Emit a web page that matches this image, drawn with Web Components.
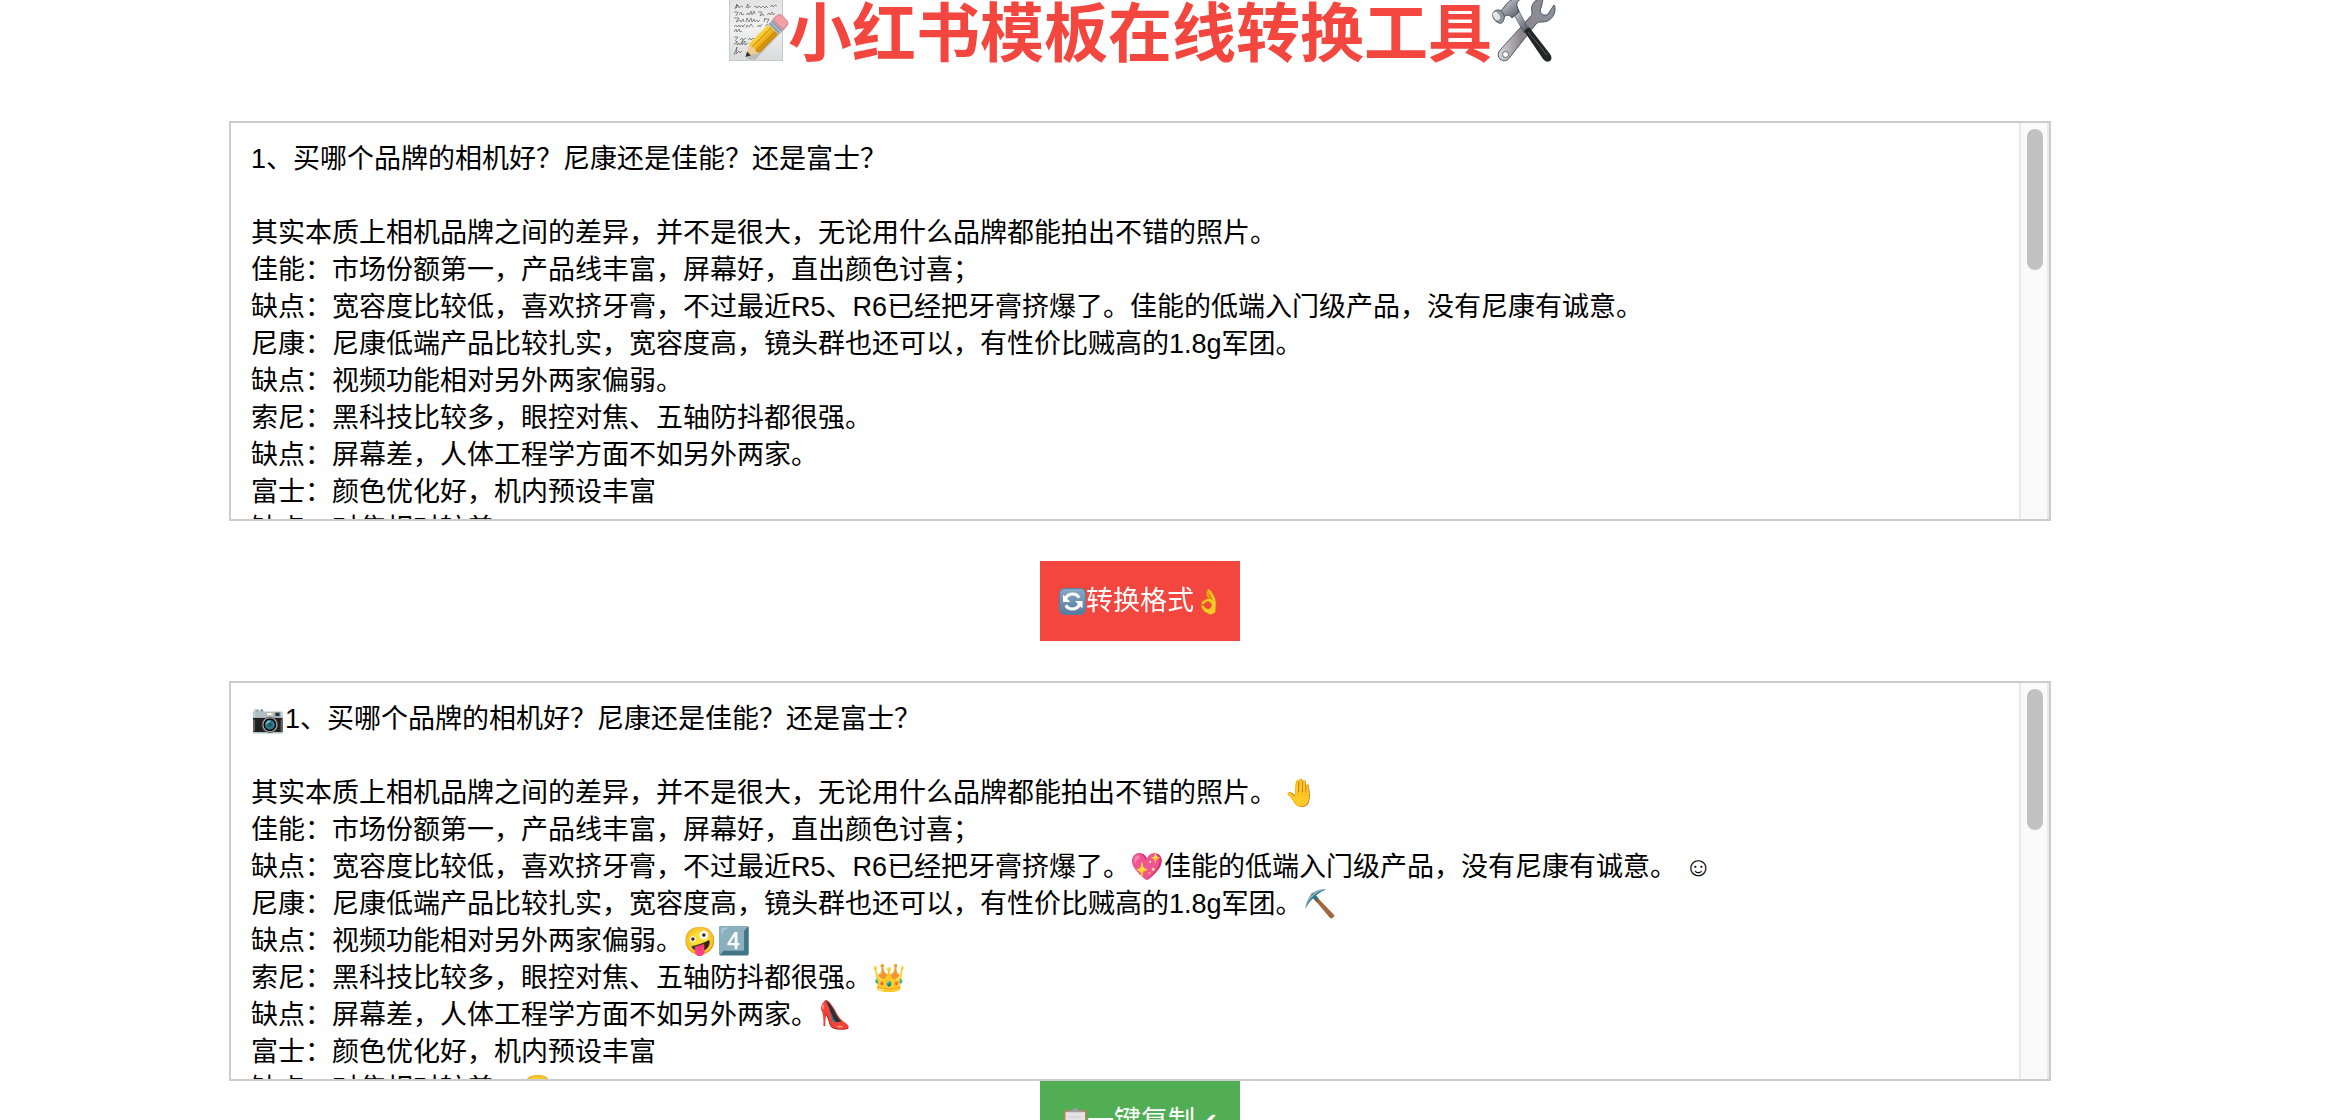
<!DOCTYPE html>
<html lang="zh-CN">
<head>
<meta charset="utf-8">
<meta name="viewport" content="width=device-width, initial-scale=1">
<title>小红书模板在线转换工具</title>
<style>
  body {
    margin: 0;
    padding-right: 50px;
    background: #fff;
    color: #000;
    font-family: "Liberation Sans", "Noto Sans CJK SC", sans-serif;
  }
</style>
</head>
<body>

<template-converter>
  <page-title>小红书模板在线转换工具</page-title>

  <text-panel id="source" label="原文">1、买哪个品牌的相机好？尼康还是佳能？还是富士？

其实本质上相机品牌之间的差异，并不是很大，无论用什么品牌都能拍出不错的照片。
佳能：市场份额第一，产品线丰富，屏幕好，直出颜色讨喜；
缺点：宽容度比较低，喜欢挤牙膏，不过最近R5、R6已经把牙膏挤爆了。佳能的低端入门级产品，没有尼康有诚意。
尼康：尼康低端产品比较扎实，宽容度高，镜头群也还可以，有性价比贼高的1.8g军团。
缺点：视频功能相对另外两家偏弱。
索尼：黑科技比较多，眼控对焦、五轴防抖都很强。
缺点：屏幕差，人体工程学方面不如另外两家。
富士：颜色优化好，机内预设丰富
缺点：对焦相对较差</text-panel>

  <action-button class="convert">
    <svg slot="before" viewBox="0 0 27 27" aria-hidden="true">
      <defs>
        <linearGradient id="refresh-bg" x1="0" y1="0" x2="0" y2="1">
          <stop offset="0" stop-color="#86a9c6"/>
          <stop offset="1" stop-color="#557a9b"/>
        </linearGradient>
      </defs>
      <rect x=".5" y=".5" width="26" height="26" rx="5" fill="url(#refresh-bg)" stroke="#5b7f9e"/>
      <path d="M6.500 10.500C8 7.300 10.500 6 13.800 6c2.800 0 5 1.300 6.400 3.600M20.500 16.500c-1.500 3.200-4 4.500-7.300 4.500-2.800 0-5-1.300-6.400-3.600" fill="none" stroke="#fff" stroke-width="3"/>
      <path d="M4 6.500v7.500h7.500zM23.500 20.500V13H16z" fill="#fff"/>
    </svg>
    转换格式
    <span slot="after">👌</span>
  </action-button>

  <text-panel id="result" label="转换结果">📷1、买哪个品牌的相机好？尼康还是佳能？还是富士？

其实本质上相机品牌之间的差异，并不是很大，无论用什么品牌都能拍出不错的照片。 🤚
佳能：市场份额第一，产品线丰富，屏幕好，直出颜色讨喜；
缺点：宽容度比较低，喜欢挤牙膏，不过最近R5、R6已经把牙膏挤爆了。💖佳能的低端入门级产品，没有尼康有诚意。 ☺
尼康：尼康低端产品比较扎实，宽容度高，镜头群也还可以，有性价比贼高的1.8g军团。⛏️
缺点：视频功能相对另外两家偏弱。🤪4️⃣
索尼：黑科技比较多，眼控对焦、五轴防抖都很强。👑
缺点：屏幕差，人体工程学方面不如另外两家。👠
富士：颜色优化好，机内预设丰富
缺点：对焦相对较差。😀</text-panel>

  <action-button class="copy">
    <svg slot="before" viewBox="0 0 27 27" aria-hidden="true">
      <rect x="4" y="2" width="22.500" height="24.500" rx="1.500" fill="#b9824f"/>
      <rect x="5.500" y="4" width="19.500" height="21.500" fill="#e4e4e6"/>
      <path d="M8 9h14M8 13h14M8 17h14M8 21h9" stroke="#cfcfd3"/>
      <path d="M7 4.200V2.800h5.500C12.500.6 13.500-.5 15.200-.5S18 .6 18 2.800h5.500v1.400z" fill="#9a9ea6"/>
      <circle cx="15.200" cy="1.500" r=".8" fill="#5da85f"/>
    </svg>
    一键复制
    <span slot="after">✔</span>
  </action-button>
</template-converter>

<script>
class TemplateConverter extends HTMLElement {
  constructor() {
    super();
    this.attachShadow({ mode: 'open' });
    this.shadowRoot.innerHTML = `
      <style>
        :host {
          display: flex;
          flex-direction: column;
          align-items: center;
        }

        ::slotted(text-panel) {
          width: calc(80% - 2px);
        }

        ::slotted(.convert) {
          --button-color: #f3463f;
          margin: 40px 0;
        }

        ::slotted(.copy) {
          --button-color: #52ae55;
        }
      </style>
      <slot></slot>
    `;
  }

  connectedCallback() {
    this.querySelector('.copy').addEventListener('click', () => {
      const text = this.querySelector('#result').value;
      if (navigator.clipboard) {
        navigator.clipboard.writeText(text);
      }
    });
  }
}

class PageTitle extends HTMLElement {
  constructor() {
    super();
    this.attachShadow({ mode: 'open' });
    this.shadowRoot.innerHTML = `
      <style>
        :host {
          display: block;
          margin-bottom: 53px;
        }

        h1 {
          display: flex;
          align-items: flex-start;
          margin: 0;
          color: #f3463f;
          font-size: 64px;
          font-weight: bold;
          line-height: 68px;
          white-space: nowrap;
        }

        svg {
          width: 64px;
          height: 64px;
          overflow: visible;
        }
      </style>
      <h1>
        <svg viewBox="0 0 64 64" aria-hidden="true">
          <defs>
            <linearGradient id="paper" x1="0" y1="0" x2="0" y2="1">
              <stop offset="0" stop-color="#e2e2e2"/>
              <stop offset=".5" stop-color="#f1f1f1"/>
              <stop offset="1" stop-color="#d9dadb"/>
            </linearGradient>
            <linearGradient id="wood" x1="0" y1="0" x2="0" y2="1">
              <stop offset="0" stop-color="#f9d648"/>
              <stop offset=".5" stop-color="#f2b51c"/>
              <stop offset="1" stop-color="#c98408"/>
            </linearGradient>
          </defs>
          <rect x="5.500" y="-3" width="53" height="63.500" fill="url(#paper)" stroke="#c6c8ca"/>
          <g fill="none" stroke="#4a4a4a" stroke-width=".6">
            <path d="M11 9l2-5-1 4 2-3 1 3 2-2 2 1M22 8l2-4 0 4 3-2M30 7l2-1 1 2 2-2 2 2 2-2 2 2 1-2 2 2M46 7l2-2 1 2 2-2 2 1"/>
            <path d="M10 12h4l-2 4M15 15l2-3 1 3 2-1M22 15l2-2 1 2 2-4 1 4 2-4 1 3M34 12h4l-2 4 3-2 1 2M43 15l2-2 1 2 2-3 1 3 2-2"/>
            <path d="M10 18h5l-3 4 4-2 1 2 2-3 1 3M22 22l1-4 2 4 2-4 1 4 2-3 1 3 2-2 1 2 2-2M40 22l1-4M40 19h5l-2 4"/>
            <path d="M10 27l2-2 1 2 2-2 1 2 2-2 1 2 2-3M22 28l1-3 2 2 2-3 2 3M33 27l2-2 1 2 2-3M41 26l3-2"/>
            <path d="M10 32l2-3 1 3 2-3 1 3 2-1M10 37h4l-3 4M16 40l2-2 1 2 3-2M24 40l2-2 1 2 2-2 1 2"/>
            <path d="M10 45l3-4 0 4 2-2 1 2 3-5-1 5 3-4 0 4 3-2M10 55l3-8-1 7 3-3 1 2 2-2"/>
          </g>
          <path d="M22 59l38-36 2 5-31 32z" fill="#000" opacity=".15"/>
          <g transform="translate(21.500 57) rotate(-45)">
            <path d="M0 0L13-7v14z" fill="#edcb94"/>
            <path d="M0 0l5-2.800v5.600z" fill="#333"/>
            <path d="M13-7h26V7H13l-2-3.500L13 0l-2-3.500z" fill="url(#wood)"/>
            <path d="M12-2.500h27M12 3h27" stroke="#b8790a" opacity=".6"/>
            <path d="M39-7h7V7h-7z" fill="#aebac6"/>
            <path d="M41-7V7M44-7V7" stroke="#7f8d9b"/>
            <path d="M46-7h5q4 0 4 4v6q0 4-4 4h-5z" fill="#f2a0a6" stroke="#d97f88"/>
          </g>
        </svg>
        <slot></slot>
        <svg viewBox="0 0 64 64" aria-hidden="true">
          <defs>
            <linearGradient id="steel" x1="0" y1="0" x2="1" y2="1">
              <stop offset="0" stop-color="#dfe1e5"/>
              <stop offset=".5" stop-color="#8d929b"/>
              <stop offset="1" stop-color="#454b54"/>
            </linearGradient>
            <linearGradient id="shank" x1="0" y1="0" x2="1" y2="0">
              <stop offset="0" stop-color="#d8d9dd"/>
              <stop offset=".4" stop-color="#8c868c"/>
              <stop offset="1" stop-color="#8b929c"/>
            </linearGradient>
          </defs>
          <path d="M51-1c-8-1-13 6-11 13 0 2 0 3-2 5L9 49c-4 4-3 8-1 10 3 3 8 2 10-2L44 24c2-2 3-2 6-2 7 0 13-5 13-13 0-2 0-3-1-4l-6 9c-2 2-6 1-7-1-1-2-1-4 0-5z" fill="url(#shank)" stroke="#4f545d"/>
          <circle cx="13.500" cy="54.500" r="3" fill="#fff" stroke="#6b6569"/>
          <path d="M21 13l5-4 11 21-5 3z" fill="url(#steel)" stroke="#4b5058" stroke-width=".6"/>
          <path d="M32 31l5-4 21 27q3 4 0 7-4 2-7-2z" fill="#232527"/>
          <path d="M36 32l19 23" stroke="#5a5d60"/>
          <path d="M9 11l4-5C17 0 23-3 31-2c-5 2-7 5-6 8l2 6-7 6c-2-3-5-4-8-1z" fill="url(#steel)" stroke="#454b54"/>
          <path d="M1 13c1-3 6-4 8-2 3 2 4 6 3 8-1 4-3 5-5 4-5-2-7-6-6-10z" fill="#8f969f" stroke="#4f565f"/>
          <ellipse cx="4.500" cy="16" rx="3" ry="4.500" transform="rotate(-35 4.500 16)" fill="#dfe6ea"/>
        </svg>
      </h1>
    `;
  }
}

class TextPanel extends HTMLElement {
  constructor() {
    super();
    this.attachShadow({ mode: 'open' });
    this.shadowRoot.innerHTML = `
      <style>
        :host {
          display: flex;
          box-sizing: border-box;
          height: 400px;
          border: 2px solid #ccc;
        }

        textarea {
          flex: 1;
          min-width: 0;
          box-sizing: border-box;
          margin: 0;
          padding: 18px 20px;
          border: 0;
          outline: 0;
          resize: none;
          overflow-y: scroll;
          scrollbar-width: none;
          background: #fff;
          color: inherit;
          font-family: inherit;
          font-size: 27px;
          line-height: 37px;
        }

        .track {
          box-sizing: border-box;
          width: 30px;
          padding: 6px 4px 6px 6px;
          border: solid #e9e9e9;
          border-width: 0 2px;
          background: #fafafa;
        }

        .thumb {
          height: 141px;
          border-radius: 8px;
          background: #c1c1c1;
        }
      </style>
      <textarea spellcheck="false"></textarea>
      <div class="track"><div class="thumb"></div></div>
    `;
  }

  connectedCallback() {
    const area = this.shadowRoot.querySelector('textarea');
    area.setAttribute('aria-label', this.getAttribute('label') || '');
    area.value = this.textContent;
  }

  get value() {
    return this.shadowRoot.querySelector('textarea').value;
  }
}

class ActionButton extends HTMLElement {
  constructor() {
    super();
    this.attachShadow({ mode: 'open' });
    this.shadowRoot.innerHTML = `
      <style>
        :host {
          display: block;
        }

        button {
          display: flex;
          align-items: center;
          justify-content: center;
          width: 200px;
          height: 80px;
          padding: 0 20px;
          border: 0;
          background: var(--button-color);
          color: #fff;
          font-family: inherit;
          font-size: 27px;
          line-height: 37px;
          white-space: nowrap;
          cursor: pointer;
        }

        ::slotted(svg) {
          flex: none;
          width: 27px;
          height: 27px;
        }

        ::slotted(span) {
          width: 27px;
          font-size: 24px;
        }
      </style>
      <button type="button"><slot name="before"></slot><slot></slot><slot name="after"></slot></button>
    `;
  }
}

customElements.define('template-converter', TemplateConverter);
customElements.define('page-title', PageTitle);
customElements.define('text-panel', TextPanel);
customElements.define('action-button', ActionButton);
</script>
</body>
</html>
